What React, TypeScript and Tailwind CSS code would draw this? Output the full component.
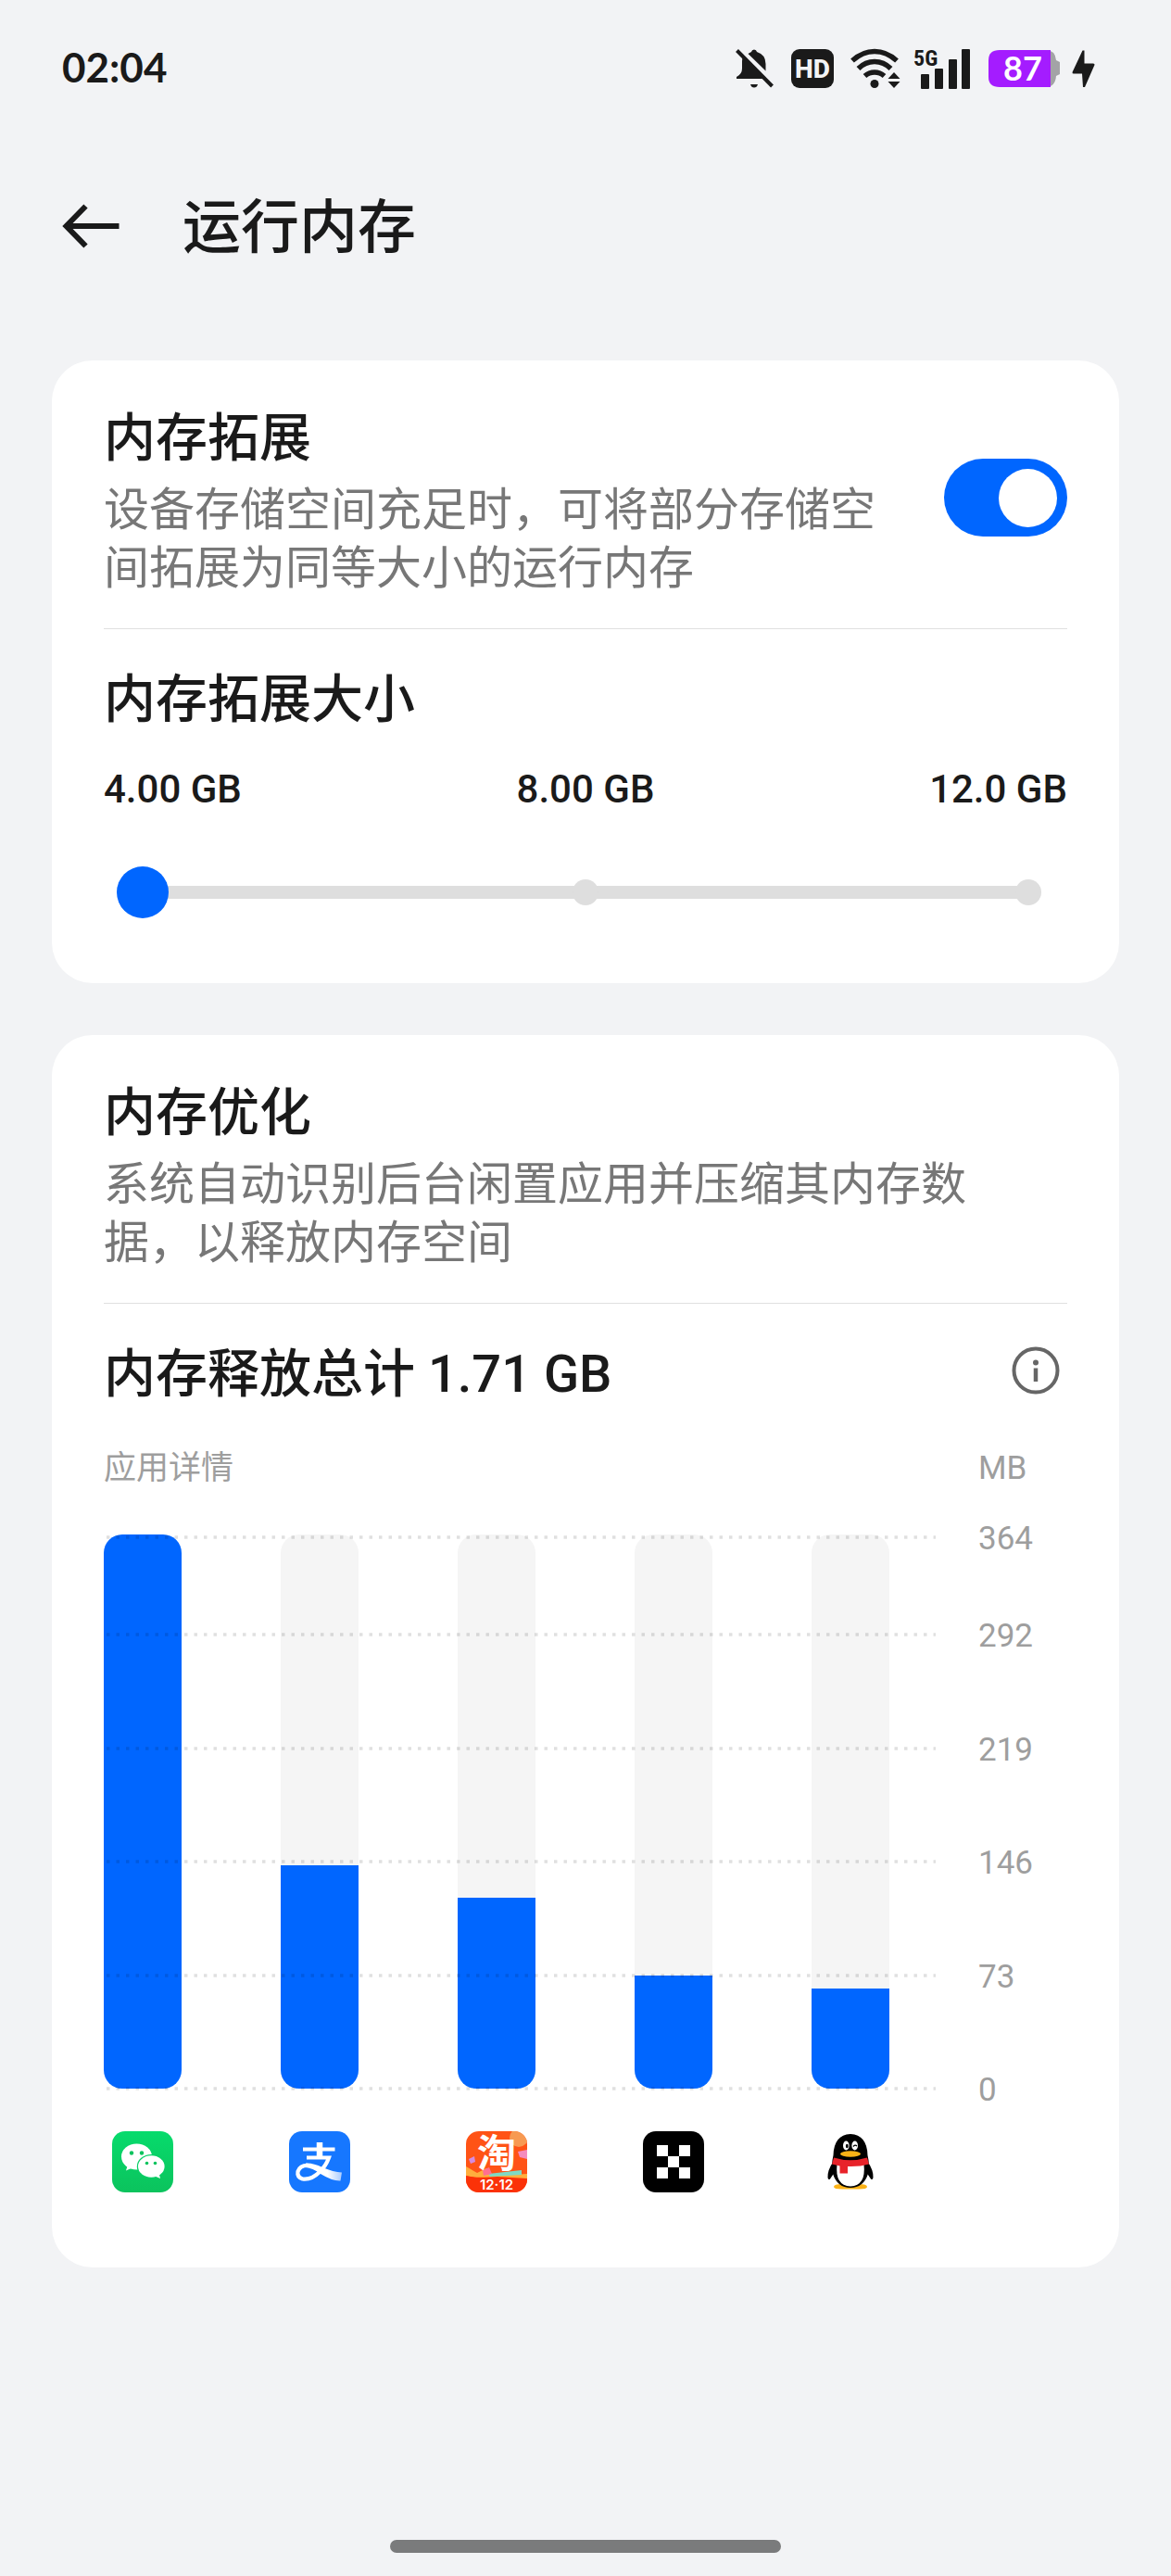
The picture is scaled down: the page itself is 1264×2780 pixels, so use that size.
import { useState } from "react";

interface AppUsage {
  name: string;
  icon: React.ReactNode;
  percent: number; // 막대 높이 (%)
}

const TICKS = [364, 292, 219, 146, 73, 0];
const SIZES = ["4.00 GB", "8.00 GB", "12.0 GB"];

const TITLE = "text-[56px] leading-[80px] font-medium text-[#1a1a1a]";
const DESC = "text-[49px] leading-[63px] text-[#777777]";

/* ── 상태바 아이콘 ── */

function BellOffIcon() {
  return (
    <svg width="42" height="44" viewBox="0 0 42 44" fill="#1a1a1a" aria-hidden="true">
      <path d="M8 9 L32 33 H1 V31 Q7 28 7 22 V14 Q7 11 8 9Z" />
      <path d="M13.500 6 Q16 4.500 17 4 Q17.500 1.500 20 1.500 Q22.500 1.500 23 4 Q32.500 7 32.500 17 V24.500Z" />
      <path d="M16 39 H24 Q23 42.500 20 42.500 Q17 42.500 16 39Z" />
      <path d="M1.500 2.500 L39.500 41" stroke="#1a1a1a" strokeWidth="4" />
    </svg>
  );
}

function HdIcon() {
  return (
    <svg width="46" height="44" viewBox="0 0 46 44" aria-hidden="true">
      <rect x="0" y="1" width="46" height="42" rx="9" fill="#1a1a1a" />
      <text x="23" y="32" textAnchor="middle" fontSize="28" fontWeight="800" fill="#f2f3f5" className="font-['Roboto',sans-serif]">HD</text>
    </svg>
  );
}

function WifiIcon() {
  return (
    <svg width="54" height="44" viewBox="0 0 54 44" fill="none" stroke="#1a1a1a" strokeWidth="5.500" aria-hidden="true">
      <path d="M2 13.500 Q13 3.500 26 3.500 Q39 3.500 50 13.500" />
      <path d="M8.500 22 Q16 14.500 26 14.500 Q36 14.500 43.500 22" />
      <path d="M15.500 30 Q20 26 26 26 Q32 26 36.500 30" />
      <circle cx="26" cy="38.500" r="4.500" fill="#1a1a1a" stroke="none" />
      <path d="M40.500 33 L47 26 L53.500 33Z M40.500 36 H53.500 L47 43Z" fill="#1a1a1a" stroke="none" />
    </svg>
  );
}

function SignalIcon() {
  return (
    <svg width="60" height="46" viewBox="0 0 60 46" fill="#1a1a1a" className="overflow-visible" aria-hidden="true">
      <text x="-1" y="20" fontSize="24" fontWeight="700" className="font-['Roboto_Condensed','Roboto',sans-serif]">5G</text>
      <rect x="7" y="29" width="9" height="16" rx="1" />
      <rect x="22" y="23" width="9" height="22" rx="1" />
      <rect x="37" y="13" width="9" height="32" rx="1" />
      <rect x="51" y="2" width="9" height="43" rx="1" />
    </svg>
  );
}

function BatteryIcon() {
  return (
    <svg width="77" height="42" viewBox="0 0 77 42" className="overflow-visible" aria-hidden="true">
      <path d="M62 1 Q72 1 73 12 L77 14 V27 L73 29 Q72 41 62 41Z" fill="#a3a3a6" />
      <path d="M12 1 H67 V41 H12 Q0 41 0 30 V12 Q0 1 12 1Z" fill="#a41cff" />
      <text x="37" y="34" textAnchor="middle" fontSize="36" fontWeight="700" fill="#ffffff" className="font-['Lato',sans-serif]">87</text>
    </svg>
  );
}

function BoltIcon() {
  return (
    <svg width="25" height="42" viewBox="0 0 25 42" fill="#1a1a1a" aria-hidden="true">
      <path d="M11.500 1.500 L0.500 25 Q0.300 26.500 2 26.500 H11 L12 41 H14 L24.500 17 Q24.800 15.500 23 15.500 H13.500 V1.500Z" />
    </svg>
  );
}

/* ── 앱 아이콘 (66x66) ── */

function WechatIcon() {
  return (
    <svg width="66" height="66" viewBox="0 0 66 66" aria-hidden="true">
      <defs>
        <linearGradient id="wechat" x1="0" y1="0" x2="0" y2="1">
          <stop offset="0" stopColor="#07db6c" />
          <stop offset="1" stopColor="#0bc35d" />
        </linearGradient>
      </defs>
      <rect width="66" height="66" rx="14" fill="url(#wechat)" />
      <path d="M17 36 L15 42.500 L23 39Z" fill="#fff" />
      <ellipse cx="26.500" cy="27.500" rx="16.500" ry="14" fill="#fff" />
      <circle cx="21" cy="23.500" r="2.200" fill="#0bc35d" />
      <circle cx="32" cy="23.500" r="2.200" fill="#0bc35d" />
      <ellipse cx="42.300" cy="38" rx="15.500" ry="13" fill="#09cf66" />
      <ellipse cx="42.300" cy="38" rx="14.300" ry="11.800" fill="#fff" />
      <path d="M45 48 L52 51 L50.500 45Z" fill="#fff" />
      <circle cx="37.500" cy="34.500" r="1.800" fill="#0bc35d" />
      <circle cx="46.500" cy="34.500" r="1.800" fill="#0bc35d" />
    </svg>
  );
}

function AlipayIcon() {
  return (
    <svg width="66" height="66" viewBox="0 0 66 66" fill="none" aria-hidden="true">
      <defs>
        <linearGradient id="alipay" x1="0" y1="0" x2="1" y2="0">
          <stop offset="0.600" stopColor="#ffffff" />
          <stop offset="1" stopColor="#a9ccff" />
        </linearGradient>
      </defs>
      <rect width="66" height="66" rx="14" fill="#1677ff" />
      <path d="M15 19.500 H49.500" stroke="#fff" strokeWidth="4" />
      <path d="M33 12 V28" stroke="#fff" strokeWidth="6.500" />
      <path d="M19 28.500 H43 Q40 37 33.500 43.500 Q24 53 14.500 51.500 Q8.500 49.500 9.500 43.500 Q12 36.500 21 37" stroke="#fff" strokeWidth="4.200" />
      <path d="M18 34.500 Q26 34 36 39 Q48 44 57 44.500 L55.500 53.500 Q47 54 34 46 Q25 39.500 18 39Z" fill="url(#alipay)" />
    </svg>
  );
}

function TaobaoIcon() {
  return (
    <svg width="66" height="66" viewBox="0 0 66 66" className="overflow-visible" aria-hidden="true">
      <defs>
        <clipPath id="taobao"><rect width="66" height="66" rx="14" /></clipPath>
      </defs>
      <g clipPath="url(#taobao)">
        <rect width="66" height="66" fill="#ff5316" />
        <circle cx="57" cy="7" r="10" fill="#f79a52" />
        <path d="M56 22 L66 20 V30 L58 28Z" fill="#f48bbd" />
        <path d="M3 30 L9 27 L10 33 L5 35Z" fill="#d58be0" />
        <path d="M0 38 L12 45 L22 40 L30 48 L66 46 V52 L14 51 L0 48Z" fill="#ffae3d" />
        <path d="M0 48 Q14 51 34 49 L66 51 V66 H0Z" fill="#fb3208" />
        <path d="M24 46 L60 42 V47 L26 49Z" fill="#7fd9c4" />
        <path d="M18 42 L25 39 L28 46 L19 48Z" fill="#ff6f91" />
      </g>
      <text x="33" y="39" textAnchor="middle" fontSize="42" fontWeight="700" fill="#fff" className="font-['Noto_Sans_CJK_SC',sans-serif]">淘</text>
      <text x="33" y="63" textAnchor="middle" fontSize="15" fontWeight="600" fill="#fff" className="font-['Inter',sans-serif]">12·12</text>
    </svg>
  );
}

function OkxIcon() {
  return (
    <svg width="66" height="66" viewBox="0 0 66 66" aria-hidden="true">
      <rect width="66" height="66" rx="14" fill="#000" />
      <path d="M15 15h12v12h-12z M39 15h12v12h-12z M27 27h12v12h-12z M15 39h12v12h-12z M39 39h12v12h-12z" fill="#fff" />
    </svg>
  );
}

function QqIcon() {
  return (
    <svg width="66" height="66" viewBox="0 0 66 66" aria-hidden="true">
      <path d="M15 60 Q15 57 24 57 H42 Q51 57 51 60 Q51 62.500 42 62.500 H24 Q15 62.500 15 60Z" fill="#fbb216" />
      <path d="M15 32 Q8 42 8.500 50 Q9 53 11 51.500 L16 44Z M51 32 Q58 42 57.500 50 Q57 53 55 51.500 L50 44Z" fill="#000" />
      <path d="M33 3 Q51 4 51.500 26 Q54 36 52 46 Q47 61 33 61 Q19 61 14 46 Q12 36 14.500 26 Q15 4 33 3Z" fill="#000" />
      <path d="M18.500 36 H47.500 Q50 58.500 33 59.500 Q16 58.500 18.500 36Z" fill="#fff" />
      <ellipse cx="28.300" cy="15.500" rx="3.300" ry="5" fill="#fff" />
      <ellipse cx="37.700" cy="15.500" rx="3.300" ry="5" fill="#fff" />
      <ellipse cx="29.300" cy="16" rx="1.400" ry="2.300" fill="#000" />
      <path d="M36 16.500 Q38 14 40 16" stroke="#000" strokeWidth="1.300" fill="none" />
      <ellipse cx="33" cy="24.500" rx="11" ry="3.200" fill="#fbb216" />
      <path d="M15 28.500 Q33 34 51 28.500 L53 35.500 Q43 38.500 30 38 V45.500 H21.500 V37.500 L13 35.500Z" fill="#e8232a" />
    </svg>
  );
}

const APPS: AppUsage[] = [
  { name: "微信", icon: <WechatIcon />, percent: 100 },
  { name: "支付宝", icon: <AlipayIcon />, percent: 40.3 },
  { name: "淘宝", icon: <TaobaoIcon />, percent: 34.4 },
  { name: "欧易", icon: <OkxIcon />, percent: 20.4 },
  { name: "QQ", icon: <QqIcon />, percent: 18.1 },
];

function StatusBar() {
  return (
    <div className="flex h-[148px] items-center justify-between pl-[67px] pr-[82px]">
      <span className="pb-1 font-['Lato',sans-serif] text-[44px] font-bold leading-[50px] text-[#1a1a1a]">02:04</span>
      <div className="flex items-center">
        <BellOffIcon />
        <span className="ml-[18px]"><HdIcon /></span>
        <span className="ml-[18px]"><WifiIcon /></span>
        <span className="ml-[15px]"><SignalIcon /></span>
        <span className="ml-5"><BatteryIcon /></span>
        <span className="ml-[13px]"><BoltIcon /></span>
      </div>
    </div>
  );
}

function ExpansionCard() {
  const [enabled, setEnabled] = useState(true);
  const [size, setSize] = useState(4);

  return (
    <section className="rounded-[44px] bg-white px-14 pb-[70px]">
      <div className="flex items-center justify-between gap-14 border-b border-[#e0e0e0] pt-10 pb-[33px]">
        <div className="pt-1">
          <label htmlFor="expansion" className={`block ${TITLE}`}>内存拓展</label>
          <p className={`mt-[6px] ${DESC}`}>设备存储空间充足时，可将部分存储空间拓展为同等大小的运行内存</p>
        </div>
        <input
          id="expansion"
          type="checkbox"
          role="switch"
          checked={enabled}
          onChange={(e) => setEnabled(e.target.checked)}
          className="flex h-[84px] w-[133px] shrink-0 appearance-none items-center rounded-full bg-[#dedede] px-[11px] before:size-[63px] before:rounded-full before:bg-white checked:justify-end checked:bg-[#0066ff]"
        />
      </div>

      <label htmlFor="size" className={`mt-9 block ${TITLE}`}>内存拓展大小</label>
      <div className="mt-8 flex justify-between text-[42px] font-medium leading-[50px] text-[#1a1a1a]">
        {SIZES.map((s) => <span key={s}>{s}</span>)}
      </div>
      {/* 트랙과 눈금 위에 실제 range 입력을 겹친다 */}
      <div className="mx-[14px] mt-[58px] grid items-center">
        <div className="col-start-1 row-start-1 mx-7 h-[14px] bg-[#dedede]" />
        <div className="col-start-1 row-start-1 mx-[14px] flex justify-between">
          {SIZES.map((s) => <span key={s} className="size-7 rounded-full bg-[#dedede]" />)}
        </div>
        <input
          id="size"
          type="range"
          min={4}
          max={12}
          step={4}
          value={size}
          onChange={(e) => setSize(Number(e.target.value))}
          className="col-start-1 row-start-1 h-14 w-full appearance-none bg-transparent [&::-webkit-slider-thumb]:size-14 [&::-webkit-slider-thumb]:appearance-none [&::-webkit-slider-thumb]:rounded-full [&::-webkit-slider-thumb]:bg-[#0066ff]"
        />
      </div>
    </section>
  );
}

function UsageChart() {
  return (
    <div className="mt-[46px]">
      <div className="relative h-[598px]">
        <div className="flex h-full justify-between pr-[192px]">
          {APPS.map((app) => (
            <div key={app.name} className="flex w-[84px] items-end overflow-hidden rounded-[20px] bg-[#f5f5f5]">
              <div className="w-full bg-[#0066ff]" style={{ height: `${app.percent}%` }} />
            </div>
          ))}
        </div>
        {/* 격자선 + 축 라벨: 막대 위에 표시 */}
        <div className="absolute inset-0 grid grid-rows-[105px_123px_122px_123px_122px_0px] pt-[3px]">
          {TICKS.map((t) => (
            <div key={t} className="flex h-0 items-center">
              <svg height="4" className="min-w-0 flex-1" aria-hidden="true">
                <line x1="3" y1="2" x2="100%" y2="2" stroke="#000" strokeOpacity="0.12" strokeWidth="3.500" strokeDasharray="3.500 7" />
              </svg>
              <span className="ml-[46px] w-24 pt-1 text-[35px] leading-[46px] text-[#9e9e9e]">{t}</span>
            </div>
          ))}
        </div>
      </div>
      <div className="mt-[46px] flex justify-between pr-[192px]">
        {APPS.map((app) => (
          <div key={app.name} role="img" aria-label={app.name} className="flex w-[84px] justify-center">{app.icon}</div>
        ))}
      </div>
    </div>
  );
}

function OptimizeCard() {
  return (
    <section className="mt-14 rounded-[44px] bg-white px-14 pb-[81px]">
      <div className="border-b border-[#e0e0e0] pt-11 pb-[33px]">
        <h2 className={TITLE}>内存优化</h2>
        <p className={`mt-[6px] pr-20 ${DESC}`}>系统自动识别后台闲置应用并压缩其内存数据，以释放内存空间</p>
      </div>
      <div className="mt-9 flex items-center justify-between pr-2">
        <h2 className={TITLE}>内存释放总计 1.71 GB</h2>
        <button type="button" aria-label="说明" className="pb-2">
          <svg width="52" height="52" viewBox="0 0 52 52" fill="none" aria-hidden="true">
            <circle cx="26" cy="26" r="23.500" stroke="#666" strokeWidth="4" />
            <circle cx="26" cy="17.500" r="3" fill="#666" />
            <path d="M26 23.500 V38" stroke="#666" strokeWidth="4.500" />
          </svg>
        </button>
      </div>
      <div className="mt-[37px] flex justify-between text-[35px] leading-[50px] text-[#9e9e9e]">
        <span>应用详情</span>
        <span className="w-24">MB</span>
      </div>
      <UsageChart />
    </section>
  );
}

export default function App() {
  return (
    <div lang="zh-CN" className="flex min-h-screen flex-col bg-[#f2f3f5] font-['Roboto','Noto_Sans_CJK_SC',sans-serif]">
      <StatusBar />
      <header className="flex items-center gap-[68px] px-[67px] pt-[54px]">
        <button type="button" aria-label="返回">
          <svg width="62" height="48" viewBox="0 0 62 48" fill="none" stroke="#1a1a1a" strokeWidth="6" aria-hidden="true">
            <path d="M61.500 24 H5 M25.500 2.500 L4.500 24 L25.500 45.500" />
          </svg>
        </button>
        <h1 className="pt-1 text-[63px] font-medium leading-[80px] text-[#1a1a1a]">运行内存</h1>
      </header>
      <main className="mt-[103px] px-14">
        <ExpansionCard />
        <OptimizeCard />
      </main>
      <div className="mx-auto mt-auto mb-[25px] h-[14px] w-1/3 rounded-full bg-[#7a7b7c]" />
    </div>
  );
}
